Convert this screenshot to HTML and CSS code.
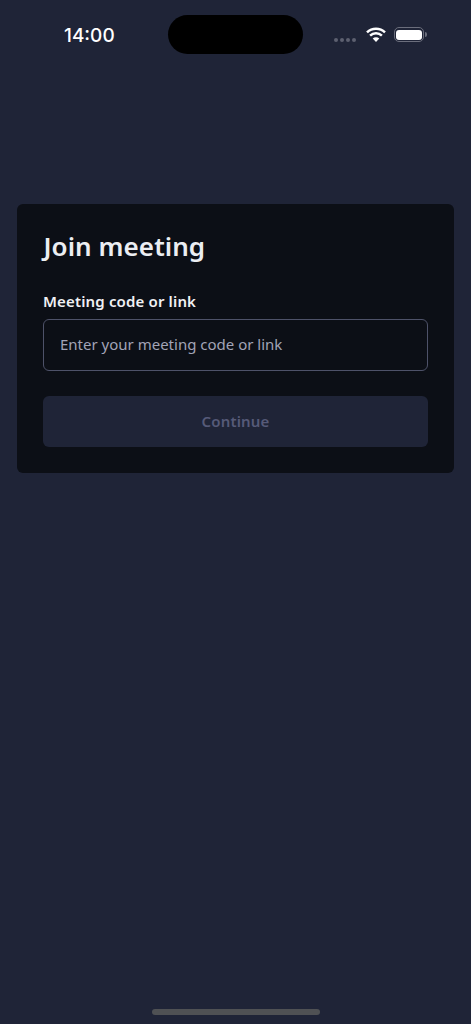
FILE: index.html
```html
<!DOCTYPE html>
<html lang="en">
<head>
<meta charset="utf-8">
<title>Join meeting</title>
<link rel="stylesheet" href="styles.css">
</head>
<body>
<div class="screen">
  <header class="status">
    <span class="time">14:00</span>
    <div class="island"></div>
    <div class="indicators">
      <div class="dots"><i></i><i></i><i></i><i></i></div>
      <svg class="wifi" width="20" height="15" viewBox="0 0 20 15" aria-hidden="true">
        <path d="M1 5.4a13 13 0 0 1 18 0" fill="none" stroke="#fff" stroke-width="2.5"/>
        <path d="M4.1 8.7a8.6 8.6 0 0 1 11.8 0" fill="none" stroke="#fff" stroke-width="2.5"/>
        <path d="M10 15 6.7 11.6a4.6 4.6 0 0 1 6.6 0z" fill="#fff"/>
      </svg>
      <div class="battery"><div class="level"></div></div>
      <div class="cap"></div>
    </div>
  </header>
  <main class="card">
    <h1 class="title">Join meeting</h1>
    <label class="label" for="code">Meeting code or link</label>
    <input class="input" id="code" type="text" placeholder="Enter your meeting code or link">
    <button class="button" type="button" disabled>Continue</button>
  </main>
  <div class="home"></div>
</div>
</body>
</html>
```
FILE: styles.css
```css
* { box-sizing: border-box; }
html, body { margin: 0; padding: 0; height: 100%; }
body {
  background: #1f2437;
  font-family: "Noto Sans", sans-serif;
  color: #f0f1f4;
}
.screen {
  height: 1024px;
  display: flex;
  flex-direction: column;
  padding: 15px 17px 9px;
  overflow: hidden;
}
.status {
  display: grid;
  grid-template-columns: 104.3px 134.4px 1fr;
  align-items: center;
  height: 39px;
  margin: 0 -17px;
  padding: 0 44px 0 64px;
}
.time {
  font-family: Inter, "Noto Sans", sans-serif;
  font-size: 19px;
  font-weight: 500;
  color: #fff;
  line-height: 37px;
  padding-top: 2px;
}
.island {
  width: 134.4px;
  height: 39px;
  background: #000;
  border-radius: 20px;
}
.indicators {
  display: flex;
  align-items: center;
  padding-left: 31.8px;
}
.dots { display: flex; gap: 2px; margin-top: 11px; margin-right: 9.5px; flex: none; }
.dots i {
  display: block;
  width: 4px;
  height: 4px;
  border-radius: 50%;
  background: #5d6070;
}
.wifi { margin-right: 8px; flex: none; }
.battery {
  width: 30.5px;
  height: 15px;
  border: 1.5px solid #6b6e7c;
  border-radius: 5px;
  padding: 1.5px;
  flex: none;
}
.level { height: 100%; background: #fff; border-radius: 3px; }
.cap {
  width: 2px;
  height: 5px;
  background: #6b6e7c;
  border-radius: 0 2px 2px 0;
  margin-left: 0.5px;
  flex: none;
}
.card {
  margin-top: 150px;
  height: 269px;
  background: #0c0f16;
  border-radius: 6px;
  padding: 25px 26px 26px;
  display: flex;
  flex-direction: column;
}
.title {
  margin: 0;
  padding-left: 0.5px;
  font-size: 26px;
  font-weight: 600;
  line-height: 34px;
  letter-spacing: 0.06px;
  color: #eceef2;
}
.label {
  margin-top: 28px;
  font-size: 15px;
  font-weight: 600;
  line-height: 20px;
  letter-spacing: 0.15px;
  color: #f0f1f4;
}
.input {
  margin-top: 8px;
  height: 52px;
  width: 100%;
  background: transparent;
  border: 1px solid #4e5269;
  border-radius: 6px;
  padding: 0 16px 1px;
  font: 400 15px "Noto Sans", sans-serif;
  color: #f0f1f4;
  outline: none;
}
.input::placeholder { color: #a2a4b6; opacity: 1; }
.button {
  margin-top: 25px;
  height: 52px;
  width: 100%;
  background: #1f2437;
  border: 0;
  border-radius: 6px;
  font: 600 15px "Noto Sans", sans-serif;
  letter-spacing: 0.15px;
  color: #565a78;
}
.home {
  margin-top: auto;
  align-self: center;
  width: 168px;
  height: 6px;
  border-radius: 3px;
  background: #4f5154;
}
```
